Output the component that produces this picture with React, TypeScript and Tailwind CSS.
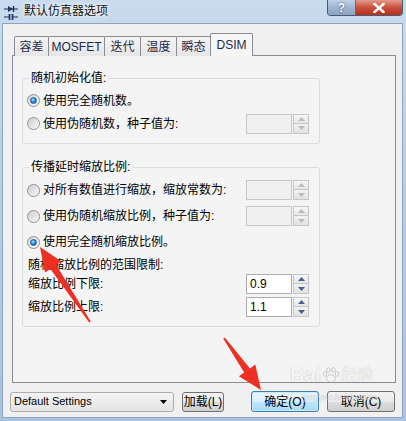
import React from "react";

const FONT = "font-['Liberation_Sans','Noto_Sans_CJK_SC',sans-serif]";

function Radio({ checked }: { checked?: boolean }) {
  return (
    <div className="w-[13px] h-[13px] rounded-full border border-[#8e8f8f] bg-[linear-gradient(135deg,#d4d4d4,#ffffff)] flex items-center justify-center shrink-0">
      {checked ? (
        <div className="w-[7px] h-[7px] rounded-full bg-[radial-gradient(circle_at_40%_35%,#b6ecff_0%,#2a8ee0_45%,#0b4f9a_100%)] border border-[#1d5f9e]" />
      ) : (
        <div className="w-[9px] h-[9px] rounded-full bg-[linear-gradient(135deg,#cfcfcf,#f4f4f4)]" />
      )}
    </div>
  );
}

function Spin({ value, enabled }: { value?: string; enabled?: boolean }) {
  const arrow = enabled ? "#4a5f8a" : "#b8bcc4";
  return (
    <div className="flex items-center gap-[1px]">
      <div
        className={
          "w-[46px] h-[20px] border flex items-center pl-[3px] text-[12px] text-black " +
          (enabled ? "bg-white border-[#abadb3]" : "bg-[#f0f0f0] border-[#c5c8cc]")
        }
      >
        {value}
      </div>
      <div className="flex flex-col w-[16px] h-[20px]">
        <div className="h-[10px] border border-[#c3c7cc] bg-[linear-gradient(#f7f7f7,#e6e6e6)] flex items-center justify-center">
          <svg width="7" height="4" viewBox="0 0 7 4">
            <path d="M0 4 L3.5 0 L7 4 Z" fill={arrow} />
          </svg>
        </div>
        <div className="h-[10px] border border-t-0 border-[#c3c7cc] bg-[linear-gradient(#f2f2f2,#e2e2e2)] flex items-center justify-center">
          <svg width="7" height="4" viewBox="0 0 7 4">
            <path d="M0 0 L3.5 4 L7 0 Z" fill={arrow} />
          </svg>
        </div>
      </div>
    </div>
  );
}

function Tab({ label, w, selected }: { label: string; w: string; selected?: boolean }) {
  return (
    <div
      className={
        "flex items-center justify-center border border-b-0 border-[#898c95] -ml-px first:ml-0 text-[12px] " +
        w +
        " " +
        (selected
          ? "h-[23px] bg-[#f6f6f6] relative z-10 rounded-t-[2px]"
          : "h-[20px] bg-[linear-gradient(#f4f4f4,#e6e6e6)] rounded-t-[2px]")
      }
    >
      <span className="text-[#1c2a4a]">{label}</span>
    </div>
  );
}

export default function App() {
  return (
    <div
      className={
        "relative w-[406px] h-[421px] overflow-hidden flex flex-col bg-[linear-gradient(180deg,#c9dbee_0%,#b6cde6_50%,#a9c3e0_100%)] " +
        FONT
      }
    >
      {/* Title bar */}
      <div className="h-[23px] flex items-start relative">
        <div className="pl-[4px] pt-[5px]">
          <svg width="14" height="16" viewBox="0 0 14 16">
            <path d="M0 4 H14" stroke="#1f2f4a" strokeWidth="1" />
            <path d="M4 1 L4 7 L9 4 Z" fill="#1f3a6a" />
            <path d="M9.5 1 V7" stroke="#1f2f4a" strokeWidth="1.4" />
            <path d="M0 12 H5 M9 12 H14" stroke="#1f2f4a" strokeWidth="1" />
            <path d="M5.5 9 V15 M8.5 9 V15" stroke="#1f3a6a" strokeWidth="1.8" />
          </svg>
        </div>
        <div className="pl-[6px] pt-[4px] text-[12px] leading-[15px] text-[#111] [text-shadow:0_0_6px_#ffffff,0_0_3px_#ffffff]">
          默认仿真器选项
        </div>
        <div className="ml-auto mr-[3px] flex h-[16px] rounded-b-[4px] border border-t-0 border-[#4b5a6e] overflow-hidden">
          <div className="w-[28px] h-full bg-[linear-gradient(#c2d3e8,#9fb5d0_50%,#8aa3c2)] border-r border-[#5d6d82] flex items-center justify-center text-white font-bold text-[12px] leading-none [text-shadow:0_0_2px_#334]">
            ?
          </div>
          <div className="w-[46px] h-full bg-[linear-gradient(#e39b8e,#c9513d_50%,#b3301c)] flex items-center justify-center">
            <svg width="12" height="10" viewBox="0 0 12 10">
              <path d="M1.5 1 L10.5 9 M10.5 1 L1.5 9" stroke="#ffffff" strokeWidth="2.4" strokeLinecap="square" />
              <path d="M1.5 1 L10.5 9 M10.5 1 L1.5 9" stroke="#ffffff" strokeWidth="1.2" />
            </svg>
          </div>
        </div>
      </div>

      {/* Client area */}
      <div className="ml-[2px] mr-[3px] mb-[3px] h-[395px] bg-[#f0f0f0] border border-[#8ea3bd] pl-[9px] pt-[9px] text-[12px] text-black">
        {/* Tabs */}
        <div className="flex items-end h-[23px] -mb-px pl-[2px]">
          <Tab label="容差" w="w-[35px]" />
          <Tab label="MOSFET" w="w-[57px]" />
          <Tab label="迭代" w="w-[37px]" />
          <Tab label="温度" w="w-[37px]" />
          <Tab label="瞬态" w="w-[35px]" />
          <Tab label="DSIM" w="w-[43px]" selected />
        </div>

        {/* Panel */}
        <div className="w-[384px] h-[328px] border border-[#898c95] bg-[#f4f4f4] pl-[9px] pt-[22px]">
          {/* Group 1 */}
          <div className="relative w-[298px] border border-[#d5dfe5] rounded-[3px] pt-[10px] pb-[8px] pr-[10px] pl-[4px]">
            <div className="absolute left-[6px] top-[-9px] px-[2px] bg-[#f4f4f4] leading-[16px]">随机初始化值:</div>
            <div className="h-[23px] flex items-center gap-[3px]">
              <Radio checked />
              <span>使用完全随机数。</span>
            </div>
            <div className="h-[23px] flex items-center">
              <div className="flex items-center gap-[3px]">
                <Radio />
                <span>使用伪随机数，种子值为:</span>
              </div>
              <div className="ml-auto">
                <Spin />
              </div>
            </div>
          </div>

          {/* Group 2 */}
          <div className="relative mt-[23px] w-[298px] border border-[#d5dfe5] rounded-[3px] pt-[9px] pb-[9px] pr-[10px] pl-[4px]">
            <div className="absolute left-[6px] top-[-9px] px-[2px] bg-[#f4f4f4] leading-[16px]">传播延时缩放比例:</div>
            <div className="h-[26px] flex items-center">
              <div className="flex items-center gap-[3px]">
                <Radio />
                <span>对所有数值进行缩放，缩放常数为:</span>
              </div>
              <div className="ml-auto">
                <Spin />
              </div>
            </div>
            <div className="h-[26px] flex items-center">
              <div className="flex items-center gap-[3px]">
                <Radio />
                <span>使用伪随机缩放比例，种子值为:</span>
              </div>
              <div className="ml-auto">
                <Spin />
              </div>
            </div>
            <div className="h-[26px] flex items-center gap-[3px]">
              <Radio checked />
              <span>使用完全随机缩放比例。</span>
            </div>
            <div className="h-[19px] flex items-center pl-[1px]">随机缩放比例的范围限制:</div>
            <div className="h-[20px] flex items-center pl-[1px]">
              <span>缩放比例下限:</span>
              <div className="ml-auto">
                <Spin value="0.9" enabled />
              </div>
            </div>
            <div className="h-[20px] mt-[3px] flex items-center pl-[1px]">
              <span>缩放比例上限:</span>
              <div className="ml-auto">
                <Spin value="1.1" enabled />
              </div>
            </div>
          </div>
        </div>

        {/* Bottom row */}
        <div className="flex items-center -ml-[2px] mt-[8px]">
          <div className="w-[164px] h-[20px] rounded-[3px] border border-[#acacac] bg-[linear-gradient(#f4f4f4,#e4e4e4)] flex items-center pl-[3px] pr-[6px] text-[11px]">
            <span>Default Settings</span>
            <svg className="ml-auto" width="7" height="4" viewBox="0 0 7 4">
              <path d="M0 0 H7 L3.5 4 Z" fill="#000" />
            </svg>
          </div>
          <div className="ml-[8px] w-[42px] h-[20px] rounded-[3px] border border-[#707070] bg-[linear-gradient(#f2f2f2_0%,#ebebeb_50%,#dddddd_51%,#cfcfcf_100%)] flex items-center justify-center">
            加载(L)
          </div>
          <div className="ml-[27px] w-[68px] h-[21px] rounded-[3px] border border-[#3c7fb1] bg-[linear-gradient(#eaf6fd_0%,#d9f0fc_50%,#bee6fd_51%,#a7d9f5_100%)] flex items-center justify-center shadow-[inset_0_0_0_1px_#cdeaf9]">
            确定(O)
          </div>
          <div className="ml-[8px] w-[68px] h-[21px] rounded-[3px] border border-[#707070] bg-[linear-gradient(#f2f2f2_0%,#ebebeb_50%,#dddddd_51%,#cfcfcf_100%)] flex items-center justify-center">
            取消(C)
          </div>
        </div>
      </div>

      {/* Baidu watermark */}
      <div className="absolute left-[290px] top-[364px] pointer-events-none flex flex-col items-start opacity-60">
        <div className="flex items-center text-[20px] leading-[22px] font-bold text-[#f7f7f7] [text-shadow:0_0_1px_#8a8a8a]">
          <span>Bai</span>
          <svg className="mx-[1px]" width="18" height="18" viewBox="0 0 18 18">
            <g fill="#f7f7f7" stroke="#9a9a9a" strokeWidth="0.8">
              <ellipse cx="9" cy="12.5" rx="4.5" ry="3.8" />
              <ellipse cx="3" cy="8" rx="1.8" ry="2.3" />
              <ellipse cx="6.5" cy="4" rx="1.8" ry="2.3" />
              <ellipse cx="11.5" cy="4" rx="1.8" ry="2.3" />
              <ellipse cx="15" cy="8" rx="1.8" ry="2.3" />
            </g>
          </svg>
          <span className="text-[16px] font-normal">经验</span>
        </div>
        <div className="text-[9px] leading-[10px] text-[#e8e8e8] [text-shadow:0_0_1px_#9a9a9a] ml-[14px] mt-[6px]">jingyan.baidu.com</div>
      </div>

      {/* Red annotation arrows */}
      <svg className="absolute left-0 top-0 pointer-events-none" width="406" height="421" viewBox="0 0 406 421">
        <polygon
          points="40,247 61.6,261.5 56.2,265 90.8,321.4 89.2,322.6 50.4,269 45,272.5"
          fill="#ee2f24"
        />
        <polygon
          points="261,390 255.3,364.6 250,368.4 224.8,337.4 223.2,338.6 244.2,372.4 238.9,376.2"
          fill="#ee2f24"
        />
      </svg>
    </div>
  );
}
